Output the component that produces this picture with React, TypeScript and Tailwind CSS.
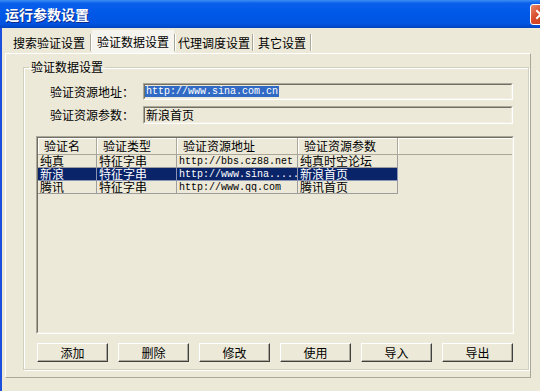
import { ReactNode } from "react";

const tabs = [
  { label: "搜索验证设置", width: "w-[82px]", active: false, sep: false },
  { label: "验证数据设置", width: "w-[82px]", active: true, sep: true },
  { label: "代理调度设置", width: "w-[76px]", active: false, sep: true },
  { label: "其它设置", width: "w-[56px]", active: false, sep: true },
];

const columns = [
  { label: "验证名", width: "w-[59px]" },
  { label: "验证类型", width: "w-[80px]" },
  { label: "验证资源地址", width: "w-[121px]" },
  { label: "验证资源参数", width: "w-[100px]" },
];

const rows = [
  { cells: ["纯真", "特征字串", "http://bbs.cz88.net", "纯真时空论坛"], selected: false },
  { cells: ["新浪", "特征字串", "http://www.sina.....", "新浪首页"], selected: true },
  { cells: ["腾讯", "特征字串", "http://www.qq.com", "腾讯首页"], selected: false },
];

const buttons = ["添加", "删除", "修改", "使用", "导入", "导出"];

// classic 3D sunken frame, used by edits and the list
function Sunken({ className, children }: { className: string; children: ReactNode }) {
  return (
    <div className={`border border-t-[#ACA899] border-l-[#ACA899] border-r-white border-b-white ${className}`}>
      <div className="h-full w-full border border-t-[#716F64] border-l-[#716F64] border-r-[#F1EFE2] border-b-[#F1EFE2]">
        {children}
      </div>
    </div>
  );
}

export default function App() {
  return (
    <div className="w-[540px] h-[391px] overflow-hidden bg-[#ECE9D8] flex flex-col font-['Noto_Sans_CJK_SC',sans-serif] text-[12px] text-black">
      {/* Title bar */}
      <div className="h-[28px] shrink-0 flex items-center pl-[5px] bg-[linear-gradient(to_bottom,#3C8EF3_0%,#0A5FEB_12%,#0058E8_50%,#0054E0_85%,#0043C0_100%)]">
        <span className="text-white font-bold text-[14px] leading-[16px] [text-shadow:1px_1px_0_#0B2A8C]">运行参数设置</span>
        <div className="ml-auto -mr-[11px] w-[21px] h-[21px] rounded-[3px] border border-white bg-[linear-gradient(135deg,#E88A6C_0%,#D8482A_45%,#C33A1C_100%)] flex items-center justify-center">
          <svg width="11" height="11" viewBox="0 0 11 11">
            <path d="M2 2 L9 9 M9 2 L2 9" stroke="#fff" strokeWidth="2" strokeLinecap="square" />
          </svg>
        </div>
      </div>

      {/* Window body */}
      <div className="flex-1 flex flex-col border-l-2 border-[#1C4FDB]">
        <div className="h-[388px] flex flex-col pt-[4px]">
          {/* Tabs */}
          <div className="flex h-[21px] pl-[6px]">
            {tabs.map((t) => (
              <div key={t.label} className="flex items-stretch">
                {t.sep && <div className="w-[2px] my-[2px] border-l border-[#ACA899] border-r border-r-white" />}
                <div
                  className={`${t.width} flex items-center justify-center leading-[12px] ${
                    t.active ? "bg-[#F5F4EE] -mt-[2px]" : ""
                  }`}
                >
                  {t.label}
                </div>
              </div>
            ))}
            <div className="w-[2px] my-[2px] border-l border-[#ACA899] border-r border-r-white" />
          </div>

          {/* Tab page */}
          <div className="ml-[3px] w-[526px] h-[325px] border border-t-white border-l-white border-r-[#ACA899] border-b-[#ACA899] pt-[7px] pl-[17px] pr-[2px]">
            <fieldset className="h-[309px] border border-[#D0D0BF] shadow-[inset_1px_1px_0_#fff,1px_1px_0_#fff] pl-[12px] pr-[14px]">
              <legend className="-ml-[7px] px-[2px] leading-[12px]">验证数据设置</legend>

              <div className="flex flex-col gap-[6px] mt-[10px]">
                <div className="flex items-center">
                  <span className="w-[107px] pl-[14px] leading-[12px]">验证资源地址：</span>
                  <Sunken className="w-[370px] h-[17px]">
                    <div className="h-full flex items-center">
                      <span className="bg-[#316AC5] text-white font-['Liberation_Mono',monospace] text-[10px] leading-[11px] px-[1px]">
                        http://www.sina.com.cn
                      </span>
                    </div>
                  </Sunken>
                </div>
                <div className="flex items-center">
                  <span className="w-[107px] pl-[14px] leading-[12px]">验证资源参数：</span>
                  <Sunken className="w-[370px] h-[18px]">
                    <div className="h-full flex items-center pl-[1px] leading-[12px]">新浪首页</div>
                  </Sunken>
                </div>
              </div>

              {/* List view */}
              <Sunken className="mt-[12px] w-[478px] h-[198px]">
                <div className="flex h-[17px] border-b border-[#ACA899]">
                  {columns.map((c) => (
                    <div
                      key={c.label}
                      className={`${c.width} flex items-center pl-[6px] leading-[12px] border-r border-[#ACA899] shadow-[inset_1px_1px_0_#fff]`}
                    >
                      {c.label}
                    </div>
                  ))}
                  <div className="flex-1 shadow-[inset_1px_1px_0_#fff]" />
                </div>
                {rows.map((r, i) => (
                  <div key={i} className={`flex w-[360px] h-[13px] ${r.selected ? "bg-[#0A246A] text-white" : ""}`}>
                    {r.cells.map((cell, j) => (
                      <div
                        key={j}
                        className={`${columns[j].width} h-[13px] pl-[2px] flex items-center overflow-hidden whitespace-nowrap border-r border-b ${
                          r.selected ? "border-[#8A94B5]" : "border-[#9D9D9D]"
                        } ${j === 2 ? "font-['Liberation_Mono',monospace] text-[10px] leading-[11px]" : "leading-[12px]"}`}
                      >
                        {cell}
                      </div>
                    ))}
                  </div>
                ))}
              </Sunken>

              {/* Buttons */}
              <div className="flex gap-[10px] mt-[9px] ml-[1px]">
                {buttons.map((b) => (
                  <button
                    key={b}
                    className="w-[71px] h-[19px] bg-[#ECE9D8] border border-t-white border-l-white border-r-[#404040] border-b-[#404040] shadow-[inset_-1px_-1px_0_#ACA899] leading-[12px] flex items-center justify-center"
                  >
                    {b}
                  </button>
                ))}
              </div>
            </fieldset>
          </div>
        </div>
        <div className="flex-1 border-t border-[#ACA899]" />
      </div>
    </div>
  );
}
